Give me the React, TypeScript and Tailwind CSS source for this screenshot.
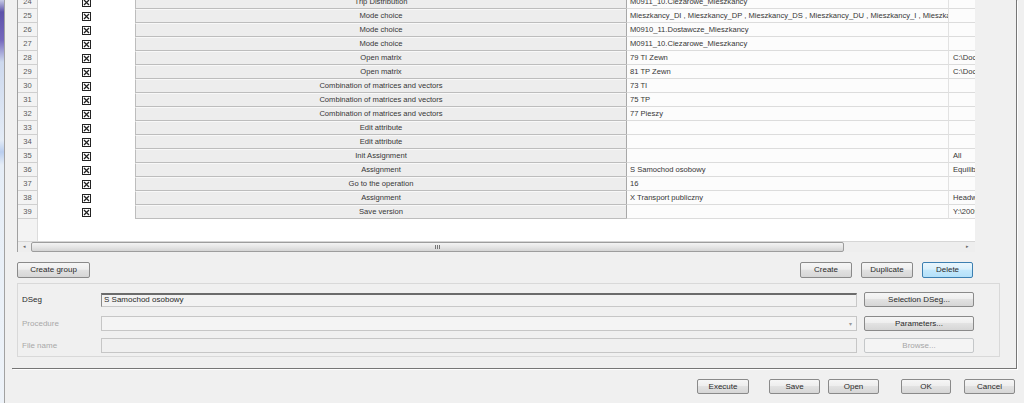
import React from "react";

type Row = { n: number; name: string; value: string; extra: string };

const rows: Row[] = [
  { n: 24, name: "Trip Distribution", value: "M0911_10.Ciezarowe_Mieszkancy", extra: "" },
  {
    n: 25,
    name: "Mode choice",
    value:
      "Mieszkancy_DI , Mieszkancy_DP , Mieszkancy_DS , Mieszkancy_DU , Mieszkancy_I , Mieszkancy_P , Mieszkancy_S",
    extra: "",
  },
  { n: 26, name: "Mode choice", value: "M0910_11.Dostawcze_Mieszkancy", extra: "" },
  { n: 27, name: "Mode choice", value: "M0911_10.Ciezarowe_Mieszkancy", extra: "" },
  { n: 28, name: "Open matrix", value: "79 TI Zewn", extra: "C:\\Documents" },
  { n: 29, name: "Open matrix", value: "81 TP Zewn", extra: "C:\\Documents" },
  { n: 30, name: "Combination of matrices and vectors", value: "73 TI", extra: "" },
  { n: 31, name: "Combination of matrices and vectors", value: "75 TP", extra: "" },
  { n: 32, name: "Combination of matrices and vectors", value: "77 Pieszy", extra: "" },
  { n: 33, name: "Edit attribute", value: "", extra: "" },
  { n: 34, name: "Edit attribute", value: "", extra: "" },
  { n: 35, name: "Init Assignment", value: "", extra: "All" },
  { n: 36, name: "Assignment", value: "S Samochod osobowy", extra: "Equilibrium" },
  { n: 37, name: "Go to the operation", value: "16", extra: "" },
  { n: 38, name: "Assignment", value: "X Transport publiczny", extra: "Headway-based" },
  { n: 39, name: "Save version", value: "", extra: "Y:\\2009" },
];

function CheckedBox() {
  return (
    <svg width="9" height="9" viewBox="0 0 9 9" className="block">
      <rect x="0.5" y="0.5" width="8" height="8" fill="#fff" stroke="#222" />
      <path d="M2 2 L7 7 M7 2 L2 7" stroke="#222" strokeWidth="1.3" />
    </svg>
  );
}

function Btn({
  label,
  w,
  className = "",
  variant = "normal",
}: {
  label: string;
  w: string;
  className?: string;
  variant?: "normal" | "focus" | "disabled";
}) {
  const look =
    variant === "focus"
      ? "border-[#3c7fb1] bg-[linear-gradient(#eaf6fd,#d9f0fc_45%,#c4e8fc_50%,#b3e0f9)] text-[#2a2a2a]"
      : variant === "disabled"
        ? "border-[#c4c7c9] bg-[#f4f4f4] text-[#a6a6a6]"
        : "border-[#8a8a8a] bg-[linear-gradient(#f6f6f6,#eeeeee_45%,#e2e2e2_50%,#d6d6d6)] text-[#2a2a2a]";
  return (
    <div
      className={`${w} h-full flex items-center justify-center rounded-[2px] border text-[8px] leading-none ${look} ${className}`}
    >
      {label}
    </div>
  );
}

function TableRow({ r }: { r: Row }) {
  return (
    <div className="flex h-[14px] shrink-0 text-[7.6px] leading-none text-[#363636]">
      <div className="w-[20px] flex items-center justify-center bg-[#f3f3f3] border-r border-b border-[#cfcfcf] text-[#5a5a5a]">
        {r.n}
      </div>
      <div className="w-[97px] flex items-center justify-center bg-white">
        <CheckedBox />
      </div>
      <div className="w-[491px] flex items-center justify-center bg-[#ededed] border-l border-b border-[#bdbdbd] border-t border-t-[#f8f8f8] whitespace-nowrap">
        {r.name}
      </div>
      <div className="w-[322px] flex items-center pl-[3px] bg-[#fcfcfc] border-l border-l-[#a8a8a8] border-b border-b-[#dcdcdc] overflow-hidden whitespace-nowrap">
        {r.value}
      </div>
      <div className="w-[27px] flex items-center pl-[4px] bg-[#fcfcfc] border-l border-l-[#e2e2e2] border-b border-b-[#dcdcdc] overflow-hidden whitespace-nowrap">
        {r.extra}
      </div>
    </div>
  );
}

function HScrollbar() {
  return (
    <div className="h-[11px] shrink-0 flex bg-[#eeeeee] border-t border-[#d6d6d6]">
      <div className="w-[13px] flex items-center justify-center text-[5px] text-[#666]">◂</div>
      <div className="w-[813px] h-full flex items-center justify-center rounded-[2px] border border-[#9d9d9d] bg-[linear-gradient(#f4f4f4,#e6e6e6_50%,#d4d4d4)]">
        <div className="flex gap-[1px]">
          <div className="w-px h-[4px] bg-[#777]" />
          <div className="w-px h-[4px] bg-[#777]" />
          <div className="w-px h-[4px] bg-[#777]" />
        </div>
      </div>
      <div className="flex-1 flex items-center justify-end pr-[6px] text-[5px] text-[#666]">▸</div>
    </div>
  );
}

export default function App() {
  return (
    <div className="w-[1024px] h-[403px] overflow-hidden flex bg-[#f0f0f0] font-['Liberation_Sans',Arial,sans-serif]">
      <div className="w-[4px] h-full bg-[linear-gradient(to_bottom,#c7cbe6_0px,#5d52aa_12px,#7568bd_40px,#cdd9ee_62px,#e4ecf6_140px,#b9cdee_152px,#e6eef7_165px,#eef3f9_100%)]" />
      <div className="w-px h-full bg-[#a2a2a2]" />
      <div className="flex-1 flex flex-col">
        {/* main panel */}
        <div className="ml-[7px] w-[1005px] h-[369px] shrink-0 flex flex-col pl-[5px] border-r border-b border-[#767676] shadow-[1px_1px_0_#ffffff]">
          {/* table */}
          <div className="w-[958px] h-[252px] shrink-0 flex flex-col overflow-hidden border-l border-[#a0a0a0] bg-white">
            <div className="-mt-[5px] flex flex-col">
              {rows.map((r) => (
                <TableRow key={r.n} r={r} />
              ))}
            </div>
            <div className="flex-1 flex">
              <div className="w-[20px] bg-[#f3f3f3] border-r border-[#dcdcdc]" />
              <div className="flex-1 bg-white" />
            </div>
            <HScrollbar />
          </div>

          {/* button row */}
          <div className="mt-[10px] h-[16px] shrink-0 flex">
            <Btn label="Create group" w="w-[73px]" />
            <Btn label="Create" w="w-[52px]" className="ml-[710px]" />
            <Btn label="Duplicate" w="w-[52px]" className="ml-[9px]" />
            <Btn label="Delete" w="w-[51px]" className="ml-[9px]" variant="focus" />
          </div>

          {/* properties group */}
          <div className="mt-[5px] w-[983px] h-[74px] shrink-0 flex flex-col pl-[4px] pt-[8px] border border-[#d9d9d9] text-[8px] leading-none">
            <div className="h-[15px] flex items-center">
              <div className="w-[79px] text-[#2a2a2a]">DSeg</div>
              <div className="w-[756px] h-[14px] flex items-center pl-[2px] bg-[#f2f2f2] border border-[#c8c8c8] border-t-2 border-t-[#6b6b6b] border-l-[#8a8a8a] text-[#2a2a2a]">
                S Samochod osobowy
              </div>
              <div className="ml-[7px] h-[15px]">
                <Btn label="Selection DSeg..." w="w-[110px]" />
              </div>
            </div>
            <div className="mt-[9px] h-[15px] flex items-center">
              <div className="w-[79px] text-[#a8a8a8]">Procedure</div>
              <div className="w-[756px] h-[15px] flex items-center justify-end pr-[4px] bg-[#f4f4f4] border border-[#c6c6c6]">
                <span className="text-[6px] text-[#9a9a9a]">▾</span>
              </div>
              <div className="ml-[7px] h-[15px]">
                <Btn label="Parameters..." w="w-[110px]" />
              </div>
            </div>
            <div className="mt-[7px] h-[15px] flex items-center">
              <div className="w-[79px] text-[#a8a8a8]">File name</div>
              <div className="w-[756px] h-[15px] bg-[#f0f0f0] border border-[#c6c6c6]" />
              <div className="ml-[7px] h-[15px]">
                <Btn label="Browse..." w="w-[110px]" variant="disabled" />
              </div>
            </div>
          </div>
        </div>

        {/* bottom buttons */}
        <div className="flex-1 flex justify-end pr-[9px] pt-[10px]">
          <div className="h-[15px] flex">
            <Btn label="Execute" w="w-[52px]" />
            <Btn label="Save" w="w-[51px]" className="ml-[20px]" />
            <Btn label="Open" w="w-[51px]" className="ml-[8px]" />
            <Btn label="OK" w="w-[50px]" className="ml-[22px]" />
            <Btn label="Cancel" w="w-[51px]" className="ml-[13px]" />
          </div>
        </div>
      </div>
    </div>
  );
}
